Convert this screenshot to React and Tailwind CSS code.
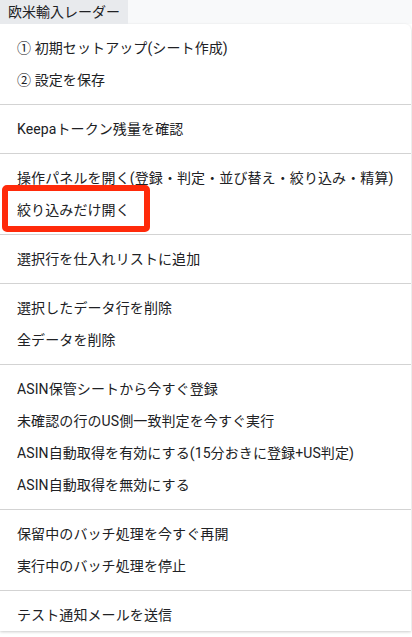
import React from 'react';

const sections = [
  ['① 初期セットアップ(シート作成)', '② 設定を保存'],
  ['Keepaトークン残量を確認'],
  ['操作パネルを開く(登録・判定・並び替え・絞り込み・精算)', '絞り込みだけ開く'],
  ['選択行を仕入れリストに追加'],
  ['選択したデータ行を削除', '全データを削除'],
  [
    'ASIN保管シートから今すぐ登録',
    '未確認の行のUS側一致判定を今すぐ実行',
    'ASIN自動取得を有効にする(15分おきに登録+US判定)',
    'ASIN自動取得を無効にする',
  ],
  ['保留中のバッチ処理を今すぐ再開', '実行中のバッチ処理を停止'],
  ['テスト通知メールを送信'],
];

export default function App() {
  return (
    <div className="relative w-[412px] h-[637px] overflow-hidden bg-white font-['Roboto','Noto_Sans_CJK_JP',sans-serif] text-[14px] text-[#202124]">
      {/* Menu bar */}
      <div className="flex h-6 bg-[#f8f9fa]">
        <div className="flex items-center px-2 bg-[#e8eaed] text-[14px] leading-none">
          欧米輸入レーダー
        </div>
      </div>

      {/* Dropdown */}
      <div className="w-[411px] bg-white rounded-tr-md shadow-[0_1px_3px_rgba(0,0,0,0.2)] pt-2">
        {sections.map((items, i) => (
          <div key={i}>
            {i > 0 && <div className="my-2 h-px bg-[#d3d3d3]" />}
            {items.map((label) => (
              <div key={label} className="relative flex items-center h-8 pl-[17px] whitespace-nowrap tracking-[0.1px]">
                {label}
                {label === '絞り込みだけ開く' && (
                  <div className="absolute left-[2px] top-[-9px] w-[148px] h-[47px] border-[6px] border-[#ff2a0a] rounded-[5px]" />
                )}
              </div>
            ))}
          </div>
        ))}
      </div>
    </div>
  );
}
